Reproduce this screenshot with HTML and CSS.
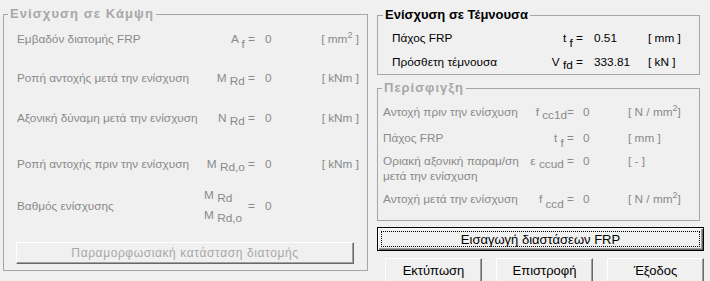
FILE: index.html
```html
<!DOCTYPE html>
<html>
<head>
<meta charset="utf-8">
<link rel="stylesheet" href="styles.css">
</head>
<body>
<div class="window">
  <fieldset class="group group-bending">
    <legend class="legend legend-disabled">Ενίσχυση σε Κάμψη</legend>
    <div class="bending-body">
      <div class="row row-1">
        <span class="label">Εμβαδόν διατομής FRP</span>
        <span class="sym">A <sub class="sub-low">f</sub> =</span>
        <span class="val">0</span>
        <span class="unit">[ mm<sup>2</sup> ]</span>
      </div>
      <div class="row row-2">
        <span class="label">Ροπή αντοχής μετά την ενίσχυση</span>
        <span class="sym">M <sub>Rd</sub> =</span>
        <span class="val">0</span>
        <span class="unit">[ kNm ]</span>
      </div>
      <div class="row row-3">
        <span class="label">Αξονική δύναμη μετά την ενίσχυση</span>
        <span class="sym">N <sub>Rd</sub> =</span>
        <span class="val">0</span>
        <span class="unit">[ kNm ]</span>
      </div>
      <div class="row row-4">
        <span class="label">Ροπή αντοχής πριν την ενίσχυση</span>
        <span class="sym">M <sub>Rd,o</sub> =</span>
        <span class="val">0</span>
        <span class="unit">[ kNm ]</span>
      </div>
      <div class="row row-5">
        <span class="label">Βαθμός ενίσχυσης</span>
        <span class="sym sym-frac"><span class="frac"><span>M <sub>Rd</sub></span><span>M <sub>Rd,o</sub></span></span><span class="eq">=</span></span>
        <span class="val">0</span>
        <span class="unit"></span>
      </div>
      <button class="btn btn-disabled" disabled>Παραμορφωσιακή κατάσταση διατομής</button>
    </div>
  </fieldset>

  <div class="right">
    <fieldset class="group group-shear">
      <legend class="legend legend-bold">Ενίσχυση σε Τέμνουσα</legend>
      <div class="shear-body">
        <div class="srow srow-1">
          <span class="label">Πάχος FRP</span>
          <span class="sym">t <sub class="sub-low">f</sub> =</span>
          <span class="val">0.51</span>
          <span class="unit">[ mm ]</span>
        </div>
        <div class="srow srow-2">
          <span class="label">Πρόσθετη τέμνουσα</span>
          <span class="sym">V <sub>fd</sub> =</span>
          <span class="val">333.81</span>
          <span class="unit">[ kN ]</span>
        </div>
      </div>
    </fieldset>

    <fieldset class="group group-conf">
      <legend class="legend legend-disabled legend-conf">Περίσφιγξη</legend>
      <div class="conf-body">
        <div class="crow crow-1">
          <span class="label">Αντοχή πριν την ενίσχυση</span>
          <span class="sym">f <sub>cc1d</sub>=</span>
          <span class="val">0</span>
          <span class="unit">[ N / mm<sup>2</sup>]</span>
        </div>
        <div class="crow crow-2">
          <span class="label">Πάχος FRP</span>
          <span class="sym">t <sub class="sub-low">f</sub> =</span>
          <span class="val">0</span>
          <span class="unit">[ mm ]</span>
        </div>
        <div class="crow crow-3">
          <span class="label">Οριακή αξονική παραμ/ση<br>μετά την ενίσχυση</span>
          <span class="sym">ε <sub>ccud</sub> =</span>
          <span class="val">0</span>
          <span class="unit">[ - ]</span>
        </div>
        <div class="crow crow-4">
          <span class="label">Αντοχή μετά την ενίσχυση</span>
          <span class="sym">f <sub class="sub-low">ccd</sub> =</span>
          <span class="val">0</span>
          <span class="unit">[ N / mm<sup>2</sup>]</span>
        </div>
      </div>
    </fieldset>

    <button class="btn btn-default"><span class="focus">Εισαγωγή διαστάσεων FRP</span></button>

    <div class="actions">
      <button class="btn btn-action">Εκτύπωση</button>
      <button class="btn btn-action">Επιστροφή</button>
      <button class="btn btn-action">Έξοδος</button>
    </div>
  </div>
</div>
</body>
</html>
```

FILE: styles.css
```css
html, body {
  margin: 0;
  padding: 0;
}
body {
  width: 710px;
  height: 281px;
  overflow: hidden;
  background: #f0f0f0;
  font-family: "Liberation Sans", Arial, sans-serif;
  font-size: 11.8px;
  color: #000;
}
.window {
  display: flex;
  align-items: flex-start;
}
.group {
  margin: 0;
  padding: 0;
  border: 1px solid #a6a6a6;
  box-sizing: border-box;
  min-width: 0;
}
.legend {
  padding: 0 2px;
  line-height: 16px;
  height: 16px;
  font-size: 13px;
}
.legend-disabled {
  color: #a8a8a8;
  font-weight: bold;
  letter-spacing: 1.1px;
  margin-left: 4px;
}
.legend-bold {
  font-weight: bold;
  color: #000;
  margin-left: 5px;
}
sub {
  font-size: 11.8px;
  vertical-align: -3px;
  line-height: 0;
}
.sub-low {
  vertical-align: -5px;
}
sup {
  font-size: 9px;
  vertical-align: 5px;
  line-height: 0;
}

/* Left group */
.group-bending {
  margin: 6px 0 0 3px;
  width: 365px;
  color: #8a8a8a;
}
.bending-body {
  display: flex;
  flex-direction: column;
  padding: 7px 8px 6px 13px;
}
.row {
  display: grid;
  grid-template-columns: 1fr auto 54px 40px;
  align-items: center;
  height: 20px;
  white-space: nowrap;
}
.row-2 { margin-top: 19px; }
.row-3 { margin-top: 20px; }
.row-4 { margin-top: 26px; }
.row-5 { margin-top: 8px; height: 48px; }
.row .sym { margin-right: 10px; justify-self: end; }
.row .unit { justify-self: end; }
.sym-frac {
  display: flex;
  align-items: center;
  gap: 6px;
}
.frac {
  display: flex;
  flex-direction: column;
  align-items: flex-start;
}
.frac > span {
  height: 20px;
  line-height: 18px;
}
.btn {
  font-family: "Liberation Sans", Arial, sans-serif;
  font-size: 13px;
  background: #f0f0f0;
  border: 1px solid;
  border-color: #fff #696969 #696969 #fff;
  box-shadow: inset -1px -1px #a0a0a0;
  padding: 0;
  margin: 0;
  box-sizing: border-box;
  color: #000;
}
.btn-disabled {
  margin: 12px 0 0 -1px;
  width: 338px;
  height: 22px;
  color: #a8a8a8;
  font-size: 12px;
  letter-spacing: 0.6px;
}

/* Right column */
.right {
  display: flex;
  flex-direction: column;
  margin-left: 9px;
  width: 327px;
}
.group-shear {
  margin-top: 7px;
  width: 323px;
}
.shear-body {
  padding: 5px 0 2px 14px;
}
.srow, .crow {
  display: grid;
  align-items: center;
  height: 20px;
  white-space: nowrap;
}
.srow {
  grid-template-columns: 1fr auto 54px 51px;
}
.srow-2 { margin-top: 4px; }
.srow .sym { margin-right: 11px; }
.group-conf {
  margin-top: 5px;
  width: 323px;
  color: #8a8a8a;
}
.legend-conf { letter-spacing: 1px; }
.conf-body {
  padding: 6px 0 11px 5px;
}
.crow {
  grid-template-columns: 1fr auto 45px 71px;
}
.crow .sym { margin-right: 9px; }
.crow-2 { margin-top: 6px; }
.crow-3 {
  margin-top: 6px;
  height: 30px;
  align-items: start;
  line-height: 15px;
}
.crow-3 .sym, .crow-3 .val, .crow-3 .unit { line-height: 15px; }
.crow-4 { margin-top: 5px; }

.btn-default {
  margin-top: 6px;
  width: 327px;
  height: 24px;
  border: 1px solid #000;
  box-shadow: inset 1px 1px #fff, inset -1px -1px #696969, inset -2px -2px #a0a0a0;
  padding: 3px;
  display: flex;
}
.focus {
  flex: 1;
  border: 1px dotted #000;
  line-height: 15px;
  text-align: center;
}
.actions {
  display: flex;
  gap: 14px;
  margin: 7px 0 0 8px;
}
.btn-action {
  width: 97px;
  height: 25px;
  flex: none;
}
```
